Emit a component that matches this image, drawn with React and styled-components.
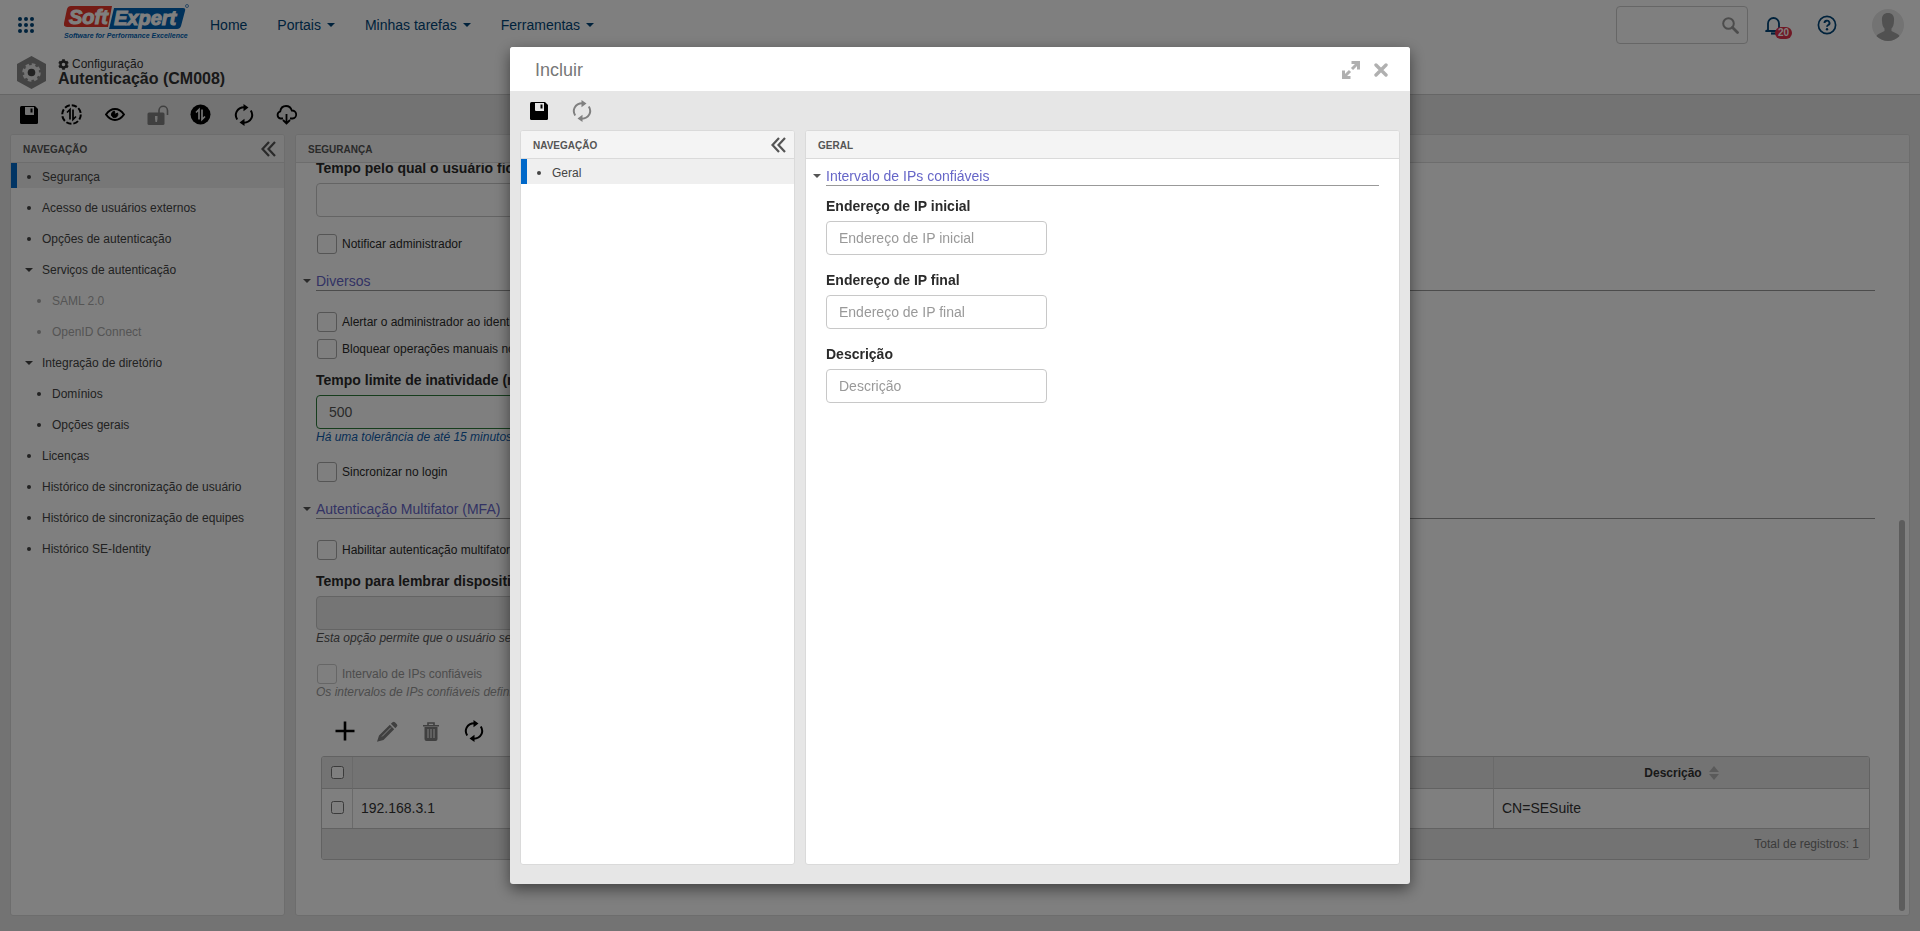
import React, { useState } from 'react';
import styled, { createGlobalStyle, css } from 'styled-components';
import { FaCog } from 'react-icons/fa';

const GlobalStyle = createGlobalStyle`
  * {
    box-sizing: border-box;
  }

  body {
    margin: 0;
    overflow: hidden;
    font-family: 'Liberation Sans', Arial, sans-serif;
    font-size: 12px;
    color: #333;
    background-color: #e6e6e6;
  }

  button, input {
    font-family: inherit;
  }
`;

const Page = styled.div`
  display: flex;
  flex-direction: column;
  height: 100vh;
`;

/* ---------- top bar ---------- */

const TopBar = styled.header`
  display: flex;
  align-items: center;
  height: 50px;
  padding: 0 16px 0 18px;
  background-color: #fff;
`;

const IconButton = styled.button`
  display: flex;
  align-items: center;
  justify-content: center;
  padding: 0;
  border: 0;
  background: none;
  color: ${(props) => props.$color || '#004578'};
  cursor: pointer;
`;

const LogoLink = styled.a`
  display: flex;
  margin: 0 20px 0 30px;
`;

const Menu = styled.nav`
  display: flex;
  flex: 1;
  gap: 30px;
`;

const MenuLink = styled.a`
  display: flex;
  align-items: center;
  gap: 6px;
  font-size: 14px;
  line-height: 20px;
  color: #004578;
  text-decoration: none;
`;

const Caret = styled.span`
  border: 4px solid transparent;
  border-top-color: currentColor;
  border-bottom: 0;
`;

const SearchBox = styled.label`
  display: flex;
  align-items: center;
  width: 132px;
  height: 38px;
  padding-right: 8px;
  border: 1px solid #ccc;
  border-radius: 4px;
  color: #999;
`;

const SearchInput = styled.input`
  flex: 1;
  min-width: 0;
  border: 0;
  outline: 0;
  padding: 0 8px;
  background: none;
`;

const UserArea = styled.div`
  display: flex;
  align-items: center;
  gap: 35px;
  margin-left: 17px;
`;

const Bell = styled(IconButton)`
  position: relative;
`;

const Badge = styled.span`
  position: absolute;
  top: 11px;
  left: 10px;
  padding: 0 3px;
  border-radius: 6px;
  background-color: #e0304a;
  color: #fff;
  font-size: 10px;
  font-weight: bold;
  line-height: 12px;
`;

/* ---------- title ---------- */

const TitleBar = styled.div`
  display: flex;
  align-items: center;
  gap: 12px;
  height: 44px;
  padding-left: 17px;
  background-color: #fff;
`;

const Breadcrumb = styled.div`
  display: flex;
  align-items: center;
  gap: 3px;
  line-height: 13px;
`;

const PageTitle = styled.h1`
  margin: 0;
  font-size: 16px;
  line-height: 16px;
`;

const Toolbar = styled.div`
  display: flex;
  align-items: center;
  height: 40px;
  padding-left: 7px;
  border-top: ${(props) => (props.$line ? '1px solid #ccc' : '0')};
`;

const ModalToolbar = styled(Toolbar)`
  height: 39px;
`;

const GridToolbar = styled(Toolbar)`
  flex-shrink: 0;
  height: 56px;
  padding-top: 6px;
`;

const ToolButton = styled.button`
  display: flex;
  align-items: center;
  justify-content: center;
  width: 43px;
  height: 30px;
  padding: 0;
  border: 0;
  background: none;
  color: #000;

  &:disabled {
    color: #808080;
  }
`;

/* ---------- panels ---------- */

const Columns = styled.main`
  display: flex;
  flex: 1;
  gap: 10px;
  min-height: 0;
  padding: 0 10px ${(props) => props.$bottom}px;
`;

const Panel = styled.section`
  position: relative;
  display: flex;
  flex-direction: column;
  flex: ${(props) => (props.$side ? '0 0 275px' : '1')};
  min-width: 0;
  overflow: hidden;
  border: 1px solid #dadada;
  border-radius: 3px;
  background-color: #fff;
`;

const PanelHeader = styled.div`
  display: flex;
  flex-shrink: 0;
  align-items: center;
  justify-content: space-between;
  height: 28px;
  padding: 0 8px 0 12px;
  border-bottom: 1px solid #dadada;
  background-color: #f4f4f4;
`;

const PanelTitle = styled.h2`
  margin: 0;
  padding-top: 2px;
  font-size: 10px;
  line-height: 12px;
  color: #555;
  text-transform: uppercase;
`;

const NavList = styled.ul`
  display: flex;
  flex-direction: column;
  gap: 6px;
  margin: 0;
  padding: 0;
  list-style: none;
`;

const NavButton = styled.button`
  display: flex;
  align-items: center;
  width: 100%;
  height: 25px;
  padding: 2px 0 0 ${(props) => (props.$nested ? 18 : 8)}px;
  border: 0;
  border-left: 6px solid transparent;
  background: none;
  font-size: 12px;
  color: #444;
  text-align: left;

  ${(props) =>
    props.$selected &&
    css`
      border-left-color: #0068c9;
      background-color: #efefef;
    `}

  &:disabled {
    color: #aaa;
  }
`;

const Marker = styled.span`
  display: flex;
  flex: 0 0 17px;
`;

const Bullet = styled.span`
  width: 4px;
  height: 4px;
  margin-left: 2px;
  border-radius: 50%;
  background-color: currentColor;
`;

/* ---------- form ---------- */

const PanelBody = styled.div`
  display: flex;
  flex: 1;
  flex-direction: column;
  justify-content: ${(props) => (props.$scrolled ? 'flex-end' : 'flex-start')};
  min-height: 0;
  overflow: hidden;
  padding: ${(props) => (props.$scrolled ? '0 34px 55px 20px' : '7px 20px')};
`;

const ScrollThumb = styled.div`
  position: absolute;
  right: 4px;
  bottom: 4px;
  width: 6px;
  height: 391px;
  border-radius: 3px;
  background-color: #b8b8b8;
`;

const SectionTitle = styled.h3`
  position: relative;
  flex-shrink: 0;
  margin: ${(props) => (props.$first ? '0 0 10px' : '17px 0 21px')};
  padding-top: 2px;
  border-bottom: 1px solid #999;
  font-size: 14px;
  font-weight: normal;
  line-height: 17px;
  color: #6666c8;
`;

const SectionCaret = styled(Caret)`
  position: absolute;
  top: 8px;
  left: -13px;
  color: #555;
`;

const Field = styled.div`
  display: flex;
  flex-direction: column;
  flex-shrink: 0;
  margin-top: ${(props) => props.$top || 0}px;
`;

const FieldLabel = styled.label`
  margin-bottom: 5px;
  font-size: 14px;
  font-weight: bold;
  line-height: 20px;
  color: #2b2b2b;
`;

const TextInput = styled.input`
  width: ${(props) => (props.$wide ? 400 : 221)}px;
  height: 34px;
  padding: 0 12px;
  border: 1px solid ${(props) => (props.$valid ? '#2c7a3a' : '#c8c8c8')};
  border-radius: 4px;
  background-color: #fff;
  font-size: 14px;
  color: #555;

  &::placeholder {
    color: #999;
  }

  &:disabled {
    background-color: #eaeaea;
  }
`;

const Hint = styled.p`
  flex-shrink: 0;
  margin: 0;
  font-style: italic;
  line-height: 16px;
  color: ${(props) => props.$color || '#555'};
`;

const CheckLabel = styled.label`
  display: flex;
  flex-shrink: 0;
  align-items: center;
  gap: 5px;
  height: 20px;
  margin-top: ${(props) => props.$top || 0}px;
  padding-left: 1px;
  color: ${(props) => (props.$disabled ? '#999' : '#2b2b2b')};
`;

const CheckInput = styled.input`
  appearance: none;
  width: 20px;
  height: 20px;
  margin: 0;
  border: 1px solid #aaa;
  border-radius: 3px;

  &:checked {
    background-color: #0068c9;
  }

  &:disabled {
    border-color: #ccc;
  }
`;

/* ---------- table ---------- */

const TableFrame = styled.div`
  flex-shrink: 0;
  margin: 0 5px;
  overflow: hidden;
  border: 1px solid #c4c4c4;
  border-radius: 3px;
`;

const Table = styled.table`
  width: 100%;
  border-spacing: 0;
  table-layout: fixed;

  th, tfoot td {
    background-color: #e6e6e6;
  }

  th, td {
    padding: 0 8px;
    border-right: 1px solid #d4d4d4;
  }

  th {
    height: 32px;
    border-bottom: 1px solid #c4c4c4;
    font-size: 12px;
  }

  td {
    height: 39px;
    font-size: 14px;
  }

  tbody td {
    padding-bottom: 2px;
  }

  tr > :last-child {
    border-right: 0;
  }

  input {
    display: block;
    width: 13px;
    height: 13px;
    margin: 0 auto;
  }

  tfoot td {
    height: 31px;
    padding-right: 10px;
    border-top: 1px solid #c4c4c4;
    font-size: 12px;
    color: #777;
    text-align: right;
  }
`;

const SortLabel = styled.span`
  display: flex;
  align-items: center;
  justify-content: center;
  gap: 7px;
`;

/* ---------- modal ---------- */

const Overlay = styled.div`
  position: fixed;
  inset: 0;
  display: flex;
  align-items: flex-start;
  justify-content: center;
  padding-top: 47px;
  background-color: rgba(0, 0, 0, 0.5);
`;

const Modal = styled.div`
  display: flex;
  flex-direction: column;
  width: 900px;
  max-width: 100%;
  height: calc(100vh - 94px);
  overflow: hidden;
  border-radius: 3px;
  background-color: #e6e6e6;
  box-shadow: 0 5px 15px rgba(0, 0, 0, 0.5);
`;

const ModalHeader = styled.div`
  display: flex;
  align-items: center;
  gap: 14px;
  height: 44px;
  flex-shrink: 0;
  padding: 2px 22px 0 25px;
  background-color: #fff;
`;

const ModalTitle = styled.h2`
  flex: 1;
  margin: 0;
  font-size: 18px;
  font-weight: normal;
  color: #777;
`;

/* ---------- icons ---------- */

const AppsIcon = () => (
  <svg width="16" height="16" viewBox="0 0 16 16" fill="currentColor">
    {[2, 8, 14].map((y) => [2, 8, 14].map((x) => <circle key={`${x}-${y}`} cx={x} cy={y} r="2" />))}
  </svg>
);

const Logo = () => (
  <svg width="126" height="42" viewBox="0 0 126 42" fontFamily="Liberation Sans, Arial, sans-serif" fontStyle="italic" fontWeight="bold">
    <path d="M7 2h41l-4 21H3q-4 0-3-4l3-14q1-3 4-3z" fill="#e8372a" />
    <path d="M50 4h69q3 0 2 3l-4 15q-1 3-4 3H45z" fill="#0063b5" />
    <text x="5" y="20" fontSize="20" fill="#fff" stroke="#fff">Soft</text>
    <text x="50" y="21" fontSize="20" fill="#fff" stroke="#fff">Expert</text>
    <text x="0" y="34" fontSize="7" fill="#0063b5">Software for Performance Excellence</text>
    <circle cx="123" cy="2" r="1.500" fill="none" stroke="#5d94c9" />
  </svg>
);

const SearchIcon = () => (
  <svg width="17" height="17" viewBox="0 0 17 17" fill="none" stroke="currentColor">
    <circle cx="6.5" cy="6.5" r="5.3" strokeWidth="2" />
    <path d="M10.5 10.5l5 5" strokeWidth="2.8" strokeLinecap="round" />
  </svg>
);

const BellIcon = () => (
  <svg width="17" height="19" viewBox="0 0 17 19" fill="none" stroke="currentColor" strokeWidth="1.8">
    <path d="M3 14V7.500a5.500 5.500 0 0 1 11 0V14l1.500 1H1l2-1z" strokeLinejoin="round" />
    <path d="M6 17.500h5" strokeWidth="2.200" />
  </svg>
);

const HelpIcon = () => (
  <svg width="20" height="20" viewBox="0 0 20 20" fill="none" stroke="currentColor">
    <circle cx="10" cy="10" r="8.600" strokeWidth="1.700" />
    <path d="M7.500 8a2.500 2.300 0 1 1 3.700 2q-1.200.7-1.200 1.800" strokeWidth="1.900" />
    <circle cx="10" cy="14.300" r="1.200" fill="currentColor" stroke="none" />
  </svg>
);

const AvatarIcon = () => (
  <svg width="32" height="32" viewBox="0 0 32 32">
    <defs>
      <clipPath id="avatar">
        <circle cx="16" cy="16" r="16" />
      </clipPath>
    </defs>
    <g clipPath="url(#avatar)">
      <rect width="32" height="32" fill="#e6e6e6" />
      <path d="M16 4c4.500 0 6.500 3 6 8-.2 4-1 6-2.500 7.500V22l6 3q3 1.500 4 8H3q0-6 3.500-8l6-3v-2.500C11 18 10.200 16 10 12c-.5-5 1.500-8 6-8z" fill="#a3a3a3" />
    </g>
  </svg>
);

const HexagonIcon = () => (
  <svg width="29" height="33" viewBox="0 0 29 33">
    <path d="M14.500 0L29 8v17l-14.500 8L0 25V8z" fill="#888" />
    <circle cx="14.500" cy="16.500" r="7.500" fill="#e6e6e6" />
    <circle cx="14.500" cy="16.500" r="8" fill="none" stroke="#e6e6e6" strokeWidth="2.500" strokeDasharray="3.600 2.683" />
    <circle cx="14.500" cy="16.500" r="3.800" fill="#444" />
  </svg>
);

const SaveIcon = () => (
  <svg width="18" height="18" viewBox="0 0 18 18">
    <path d="M1.500 0H15l3 3v13.500q0 1.500-1.500 1.500h-15Q0 18 0 16.500v-15Q0 0 1.500 0z" fill="currentColor" />
    <path d="M5 1h9v8H6q-1 0-1-1z" fill="#e6e6e6" />
    <path d="M10.500 2.500h2v4h-2z" fill="currentColor" />
  </svg>
);

const SyncArrows = ({ filled }) => (
  <svg width="21" height="21" viewBox="0 0 21 21" fill="none">
    {filled ? (
      <circle cx="10.500" cy="10.500" r="10" fill="currentColor" />
    ) : (
      <circle cx="10.500" cy="10.500" r="9.300" stroke="currentColor" strokeWidth="2" strokeDasharray="5.300 2" />
    )}
    <path d="M6 8.500L9 5.500v10M15 12.500l-3 3v-10" stroke={filled ? '#e6e6e6' : '#000'} strokeWidth="1.700" />
  </svg>
);

const EyeIcon = () => (
  <svg width="20" height="13" viewBox="0 0 20 13" fill="none" stroke="currentColor">
    <path d="M1 6.500Q5 1 10 1t9 5.500Q15 12 10 12T1 6.500z" strokeWidth="2" />
    <path d="M12.500 5a3.200 3.200 0 1 1-3-1.800l.5 3.300z" fill="currentColor" strokeWidth="1" />
  </svg>
);

const UnlockIcon = () => (
  <svg width="22" height="20" viewBox="0 0 22 20">
    <path d="M12 8V5.500a4 4 0 0 1 8.500 0V10" fill="none" stroke="currentColor" strokeWidth="1.600" />
    <path d="M2 7.500h14q1.500 0 1.500 1.500v9.500q0 1.500-1.500 1.500H2Q.5 20 .5 18.500V9Q.5 7.500 2 7.500z" fill="currentColor" />
    <path d="M8 11h2.500v2.500L10 17H8.500L8 13.500z" fill="#e6e6e6" />
  </svg>
);

const RefreshIcon = () => (
  <svg width="20" height="22" viewBox="0 0 20 22" fill="none" stroke="currentColor" strokeWidth="2">
    <path d="M3.200 15.500C0 10.500 2.500 3.500 10.500 3.300" />
    <path d="M16.800 6.500C20 11.500 17.500 18.500 9.500 18.700" />
    <path d="M9.500 0l5 3.500-5 3.700zM10.500 22l-5-3.500 5-3.700z" fill="currentColor" stroke="none" />
  </svg>
);

const CloudIcon = () => (
  <svg width="21" height="20" viewBox="0 0 21 20" fill="none" stroke="currentColor" strokeWidth="1.800">
    <path d="M7 13.500H4.500a3.600 3.600 0 0 1-.3-7Q5 1 10 1q4.500 0 5.800 4.500a4 4 0 0 1 .7 8H14" />
    <path d="M10.500 9v9M7 15l3.500 3.500L14 15" />
  </svg>
);

const CollapseIcon = () => (
  <svg width="15" height="16" viewBox="0 0 15 16" fill="none" stroke="#555" strokeWidth="2.200">
    <path d="M8 1L1.500 8 8 15M14 1L7.500 8l6.500 7" />
  </svg>
);

const PlusIcon = () => (
  <svg width="20" height="20" viewBox="0 0 20 20" stroke="currentColor" strokeWidth="2.600">
    <path d="M10 .5v19M.5 10h19" />
  </svg>
);

const PencilIcon = () => (
  <svg width="21" height="21" viewBox="0 0 21 21" fill="currentColor">
    <path d="M15.500 1.200q1.200-1 2.400 0l2 2q1 1.200 0 2.400l-1.600 1.600-4.400-4.400zM12.800 3.800l4.400 4.400L6.500 19 0 20.800 2 14.500z" />
    <path d="M14 6.500L5 15.500" stroke="#fff" strokeWidth="1" />
  </svg>
);

const TrashIcon = () => (
  <svg width="16" height="19" viewBox="0 0 16 19" fill="none" stroke="currentColor">
    <path d="M0 3.800h16M5 3.500V1h6v2.500" strokeWidth="1.600" />
    <path d="M1.500 5h13v12q0 2-2 2h-9q-2 0-2-2z" fill="currentColor" stroke="none" />
    <path d="M5 7v9M8 7v9M11 7v9" stroke="#fff" strokeWidth="1" />
  </svg>
);

const SortIcon = () => (
  <svg width="10" height="14" viewBox="0 0 10 14" fill="#b5b5b5">
    <path d="M5 0l5 6H0zM5 14L0 8h10z" />
  </svg>
);

const ExpandIcon = () => (
  <svg width="18" height="18" viewBox="0 0 18 18" fill="none" stroke="currentColor" strokeWidth="3">
    <path d="M9.500 1.500h7v7M16 2l-6 6M8.500 16.500h-7v-7M2 16l6-6" />
  </svg>
);

const CloseIcon = () => (
  <svg width="14" height="14" viewBox="0 0 14 14" stroke="currentColor" strokeWidth="3.400" strokeLinecap="round">
    <path d="M2 2l10 10M12 2L2 12" />
  </svg>
);

const menuItems = [
  { label: 'Home' },
  { label: 'Portais', dropdown: true },
  { label: 'Minhas tarefas', dropdown: true },
  { label: 'Ferramentas', dropdown: true },
];

const navItems = [
  { label: 'Segurança' },
  { label: 'Acesso de usuários externos' },
  { label: 'Opções de autenticação' },
  { label: 'Serviços de autenticação', open: true },
  { label: 'SAML 2.0', nested: true, disabled: true },
  { label: 'OpenID Connect', nested: true, disabled: true },
  { label: 'Integração de diretório', open: true },
  { label: 'Domínios', nested: true },
  { label: 'Opções gerais', nested: true },
  { label: 'Licenças' },
  { label: 'Histórico de sincronização de usuário' },
  { label: 'Histórico de sincronização de equipes' },
  { label: 'Histórico SE-Identity' },
];

const ipFields = [
  { id: 'ip-start', label: 'Endereço de IP inicial' },
  { id: 'ip-end', label: 'Endereço de IP final' },
  { id: 'description', label: 'Descrição' },
];

const NavPanel = ({ items }) => {
  const [selected, setSelected] = useState(items[0].label);

  return (
    <Panel $side>
      <PanelHeader>
        <PanelTitle>Navegação</PanelTitle>
        <IconButton aria-label="Recolher">
          <CollapseIcon />
        </IconButton>
      </PanelHeader>
      <NavList>
        {items.map((item) => (
          <li key={item.label}>
            <NavButton
              $nested={item.nested}
              $selected={item.label === selected}
              disabled={item.disabled}
              onClick={() => setSelected(item.label)}
            >
              <Marker>{item.open ? <Caret /> : <Bullet />}</Marker>
              {item.label}
            </NavButton>
          </li>
        ))}
      </NavList>
    </Panel>
  );
};

const Section = ({ first, children }) => (
  <SectionTitle $first={first}>
    <SectionCaret />
    {children}
  </SectionTitle>
);

const Check = ({ top, disabled, children }) => (
  <CheckLabel $top={top} $disabled={disabled}>
    <CheckInput type="checkbox" disabled={disabled} />
    {children}
  </CheckLabel>
);

const App = () => {
  const [open, setOpen] = useState(true);

  return (
    <>
      <GlobalStyle />
      <Page>
        <TopBar>
          <IconButton aria-label="Aplicativos"><AppsIcon /></IconButton>
          <LogoLink href="#" aria-label="SoftExpert"><Logo /></LogoLink>
          <Menu>
            {menuItems.map((item) => (
              <MenuLink key={item.label} href="#">
                {item.label}
                {item.dropdown && <Caret />}
              </MenuLink>
            ))}
          </Menu>
          <SearchBox>
            <SearchInput type="text" aria-label="Pesquisar" />
            <SearchIcon />
          </SearchBox>
          <UserArea>
            <Bell aria-label="Notificações">
              <BellIcon />
              <Badge>20</Badge>
            </Bell>
            <IconButton aria-label="Ajuda"><HelpIcon /></IconButton>
            <IconButton aria-label="Usuário"><AvatarIcon /></IconButton>
          </UserArea>
        </TopBar>

        <TitleBar>
          <HexagonIcon />
          <div>
            <Breadcrumb><FaCog size={11} /> Configuração</Breadcrumb>
            <PageTitle>Autenticação (CM008)</PageTitle>
          </div>
        </TitleBar>

        <Toolbar $line>
          <ToolButton aria-label="Salvar"><SaveIcon /></ToolButton>
          <ToolButton aria-label="Testar sincronização"><SyncArrows /></ToolButton>
          <ToolButton aria-label="Visualizar"><EyeIcon /></ToolButton>
          <ToolButton aria-label="Desbloquear" disabled><UnlockIcon /></ToolButton>
          <ToolButton aria-label="Sincronizar"><SyncArrows filled /></ToolButton>
          <ToolButton aria-label="Atualizar"><RefreshIcon /></ToolButton>
          <ToolButton aria-label="Baixar"><CloudIcon /></ToolButton>
        </Toolbar>

        <Columns $bottom={15}>
          <NavPanel items={navItems} />
          <Panel>
            <PanelHeader>
              <PanelTitle>Segurança</PanelTitle>
            </PanelHeader>
            <PanelBody $scrolled>
              <Field>
                <FieldLabel htmlFor="lock-time">Tempo pelo qual o usuário ficará</FieldLabel>
                <TextInput id="lock-time" $wide />
              </Field>
              <Check top={17}>Notificar administrador</Check>

              <Section>Diversos</Section>
              <Check>Alertar o administrador ao identificar</Check>
              <Check top={7}>Bloquear operações manuais no sistema</Check>
              <Field $top={11}>
                <FieldLabel htmlFor="idle-time">Tempo limite de inatividade (minutos)</FieldLabel>
                <TextInput id="idle-time" defaultValue="500" $wide $valid />
              </Field>
              <Hint $color="#0d5cab">Há uma tolerância de até 15 minutos</Hint>
              <Check top={17}>Sincronizar no login</Check>

              <Section>Autenticação Multifator (MFA)</Section>
              <Check>Habilitar autenticação multifator</Check>
              <Field $top={11}>
                <FieldLabel htmlFor="device-time">Tempo para lembrar dispositivo</FieldLabel>
                <TextInput id="device-time" disabled $wide />
              </Field>
              <Hint>Esta opção permite que o usuário seja lembrado</Hint>
              <Check top={18} disabled>Intervalo de IPs confiáveis</Check>
              <Hint $color="#999">Os intervalos de IPs confiáveis definidos</Hint>

              <GridToolbar>
                <ToolButton aria-label="Incluir" onClick={() => setOpen(true)}><PlusIcon /></ToolButton>
                <ToolButton aria-label="Editar" disabled><PencilIcon /></ToolButton>
                <ToolButton aria-label="Excluir" disabled><TrashIcon /></ToolButton>
                <ToolButton aria-label="Atualizar"><RefreshIcon /></ToolButton>
              </GridToolbar>
              <TableFrame>
                <Table>
                  <colgroup>
                    <col width="31" />
                    <col />
                    <col />
                    <col width="375" />
                  </colgroup>
                  <thead>
                    <tr>
                      <th><input type="checkbox" aria-label="Selecionar todos" /></th>
                      <th>Endereço de IP inicial</th>
                      <th>Endereço de IP final</th>
                      <th><SortLabel>Descrição <SortIcon /></SortLabel></th>
                    </tr>
                  </thead>
                  <tbody>
                    <tr>
                      <td><input type="checkbox" aria-label="Selecionar 192.168.3.1" /></td>
                      <td>192.168.3.1</td>
                      <td />
                      <td>CN=SESuite</td>
                    </tr>
                  </tbody>
                  <tfoot>
                    <tr>
                      <td colSpan="4">Total de registros: 1</td>
                    </tr>
                  </tfoot>
                </Table>
              </TableFrame>
            </PanelBody>
            <ScrollThumb />
          </Panel>
        </Columns>
      </Page>

      {open && (
        <Overlay>
          <Modal role="dialog" aria-modal="true" aria-labelledby="modal-title">
            <ModalHeader>
              <ModalTitle id="modal-title">Incluir</ModalTitle>
              <IconButton $color="#b0b0b0" aria-label="Maximizar"><ExpandIcon /></IconButton>
              <IconButton $color="#b0b0b0" aria-label="Fechar" onClick={() => setOpen(false)}><CloseIcon /></IconButton>
            </ModalHeader>
            <ModalToolbar>
              <ToolButton aria-label="Salvar"><SaveIcon /></ToolButton>
              <ToolButton aria-label="Atualizar" disabled><RefreshIcon /></ToolButton>
            </ModalToolbar>
            <Columns as="div" $bottom={19}>
              <NavPanel items={[{ label: 'Geral' }]} />
              <Panel>
                <PanelHeader>
                  <PanelTitle>Geral</PanelTitle>
                </PanelHeader>
                <PanelBody>
                  <Section first>Intervalo de IPs confiáveis</Section>
                  {ipFields.map((field, index) => (
                    <Field key={field.id} $top={index > 0 ? 15 : 0}>
                      <FieldLabel htmlFor={field.id}>{field.label}</FieldLabel>
                      <TextInput id={field.id} placeholder={field.label} />
                    </Field>
                  ))}
                </PanelBody>
              </Panel>
            </Columns>
          </Modal>
        </Overlay>
      )}
    </>
  );
};

export default App;
